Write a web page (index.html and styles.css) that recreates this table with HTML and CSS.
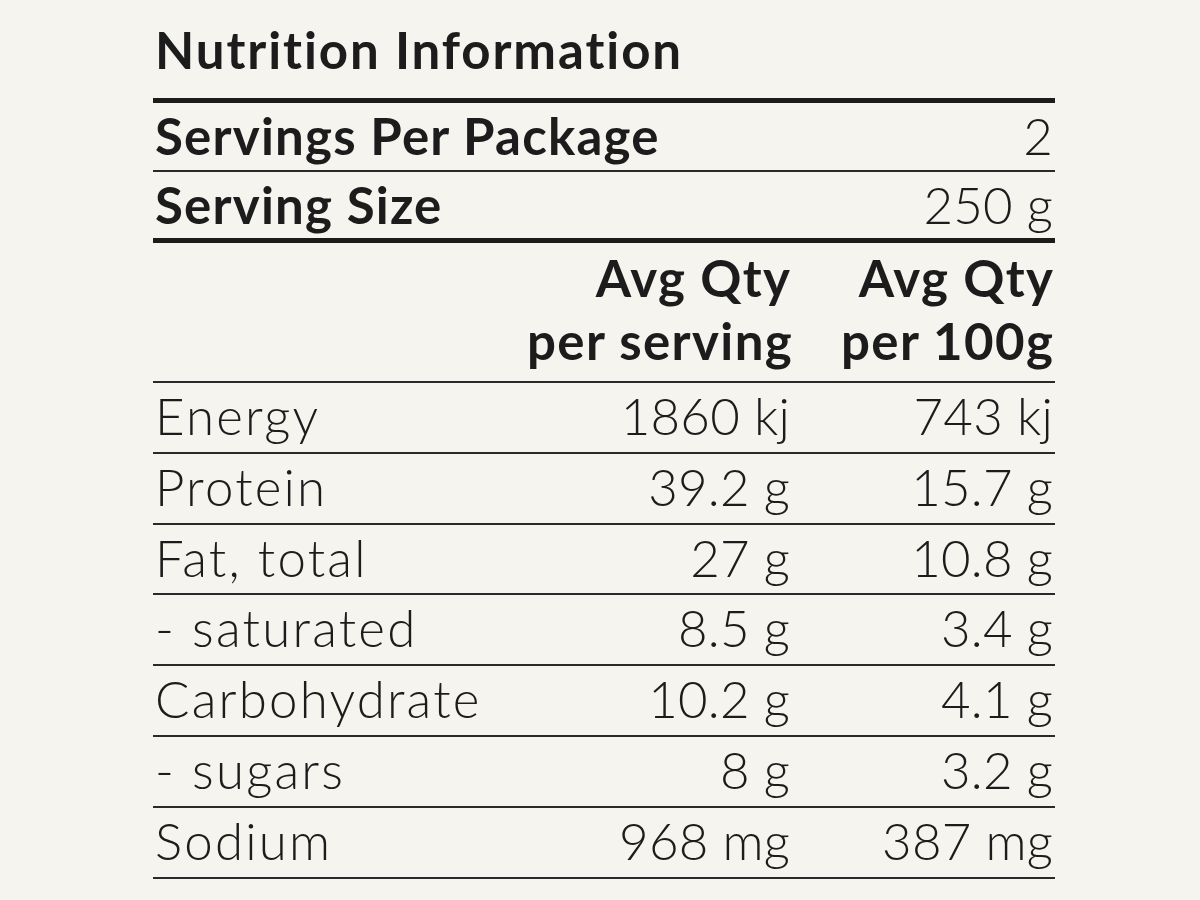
FILE: index.html
```html
<!DOCTYPE html>
<html>
<head>
<meta charset="utf-8">
<link rel="stylesheet" href="styles.css">
</head>
<body>
<div class="panel">
  <h1 class="title">Nutrition Information</h1>
  <div class="facts">
    <div class="row strong first">
      <div class="c-label">Servings Per Package</div>
      <div class="c-val span2">2</div>
    </div>
    <div class="row strong thick">
      <div class="c-label">Serving Size</div>
      <div class="c-val span2">250 g</div>
    </div>
    <div class="row head">
      <div class="c-label"></div>
      <div class="c-val">Avg Qty<br>per serving</div>
      <div class="c-val">Avg Qty<br>per 100g</div>
    </div>
    <div class="row"><div class="c-label">Energy</div><div class="c-val">1860 kj</div><div class="c-val">743 kj</div></div>
    <div class="row"><div class="c-label">Protein</div><div class="c-val">39.2 g</div><div class="c-val">15.7 g</div></div>
    <div class="row"><div class="c-label">Fat, total</div><div class="c-val">27 g</div><div class="c-val">10.8 g</div></div>
    <div class="row"><div class="c-label">- saturated</div><div class="c-val">8.5 g</div><div class="c-val">3.4 g</div></div>
    <div class="row"><div class="c-label">Carbohydrate</div><div class="c-val">10.2 g</div><div class="c-val">4.1 g</div></div>
    <div class="row"><div class="c-label">- sugars</div><div class="c-val">8 g</div><div class="c-val">3.2 g</div></div>
    <div class="row"><div class="c-label">Sodium</div><div class="c-val">968 mg</div><div class="c-val">387 mg</div></div>
  </div>
</div>
</body>
</html>
```

FILE: styles.css
```css
html, body {
  margin: 0;
  padding: 0;
  background: #f5f4ef;
}
body {
  font-family: "Lato", "Liberation Sans", sans-serif;
  font-variant-ligatures: none;
  color: #1c1c1c;
  width: 1200px;
  height: 900px;
  overflow: hidden;
}
.panel {
  margin-left: 153px;
  width: 902px;
  padding-top: 20px;
}
.title {
  margin: 0 0 18px 2px;
  font-size: 51px;
  line-height: 60px;
  font-weight: 700;
  letter-spacing: 1.9px;
  white-space: nowrap;
}
.facts {
  border-top: 5px solid #1c1c1c;
}
.row {
  display: grid;
  grid-template-columns: minmax(0, 1fr) 265px 263px;
  font-size: 51px;
  font-weight: 300;
  line-height: 65px;
  padding-bottom: 3.8px;
  border-bottom: 2px solid #2a2a2a;
  white-space: nowrap;
}
.row.strong {
  padding-bottom: 2px;
}
.row.strong .c-label {
  font-weight: 700;
  letter-spacing: 1.2px;
}
.row.thick {
  padding-bottom: 1px;
  border-bottom: 5px solid #1c1c1c;
}
.row.head {
  font-weight: 700;
  line-height: 63px;
  padding-top: 3px;
  padding-bottom: 9px;
}
.row.head .c-val {
  letter-spacing: 1.4px;
  margin-right: -1.4px;
}
.c-label {
  padding-left: 2px;
  letter-spacing: 2.2px;
  overflow: visible;
}
.c-val {
  text-align: right;
  padding-right: 2px;
  letter-spacing: 0.2px;
}
.c-val.span2 {
  grid-column: 2 / 4;
}
```
